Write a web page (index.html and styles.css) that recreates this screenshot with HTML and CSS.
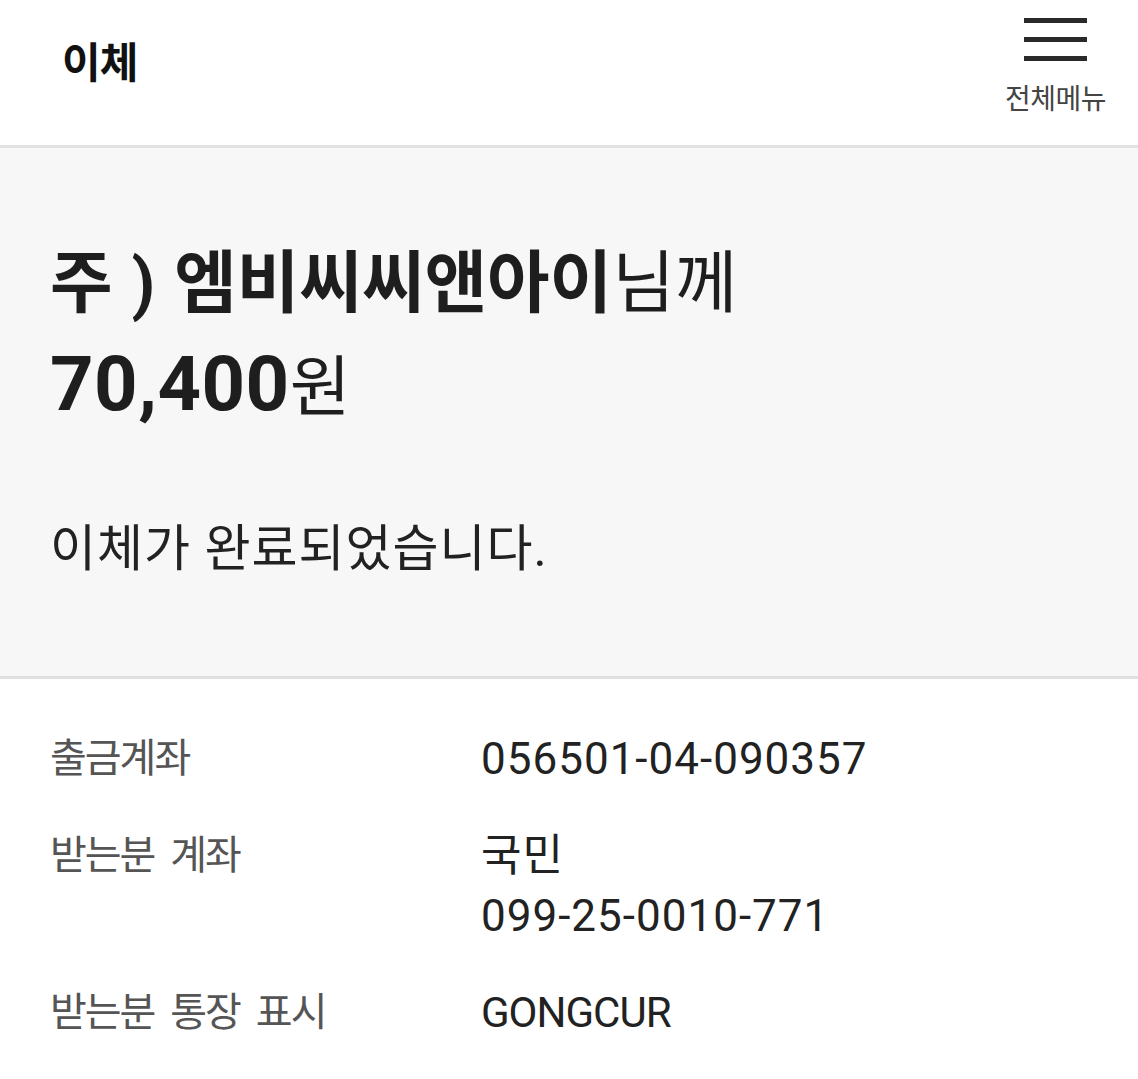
FILE: index.html
```html
<!DOCTYPE html>
<html lang="ko">
<head>
  <meta charset="UTF-8" />
  <meta name="viewport" content="width=device-width, initial-scale=1.0"/>
  <title>이체</title>
  <link rel="stylesheet" href="styles.css">
</head>
<body>

  <header>
    <h1>이체</h1>
    <div class="menu-btn">
      <div class="hamburger">
        <span></span>
        <span></span>
        <span></span>
      </div>
      <div class="menu-label">전체메뉴</div>
    </div>
  </header>

  <section class="result">
    <div class="to-whom"><strong>주 ) 엠비씨씨앤아이</strong>님께</div>
    <div class="amount"><strong>70,400</strong><span class="won">원</span></div>
    <p class="done">이체가 완료되었습니다.</p>
  </section>

  <section class="details">
    <div class="row">
      <div class="label">출금계좌</div>
      <div class="value">056501-04-090357</div>
    </div>
    <div class="row">
      <div class="label">받는분 계좌</div>
      <div class="value">국민<br>099-25-0010-771</div>
    </div>
    <div class="row">
      <div class="label">받는분 통장 표시</div>
      <div class="value name">GONGCUR</div>
    </div>
  </section>

</body>
</html>
```

FILE: styles.css
```css
body {
  margin: 0;
  font-family: Roboto, 'Noto Sans CJK KR', sans-serif;
  background: #fff;
  color: #222;
}
header {
  height: 145px;
  border-bottom: 3px solid #e2e2e2;
  display: flex;
  justify-content: space-between;
  align-items: flex-start;
  padding: 0 32px 0 62px;
}
header h1 {
  margin: 0;
  padding-top: 29px;
  font-size: 42px;
  font-weight: bold;
  color: #111;
  letter-spacing: -1px;
}
.menu-btn {
  display: flex;
  flex-direction: column;
  align-items: center;
  padding-top: 18px;
}
.hamburger {
  width: 63px;
  height: 43px;
  display: flex;
  flex-direction: column;
  justify-content: space-between;
}
.hamburger span {
  display: block;
  height: 5px;
  background: #2a2a2a;
}
.menu-label {
  margin-top: 16px;
  font-size: 28px;
  color: #444;
  letter-spacing: -0.5px;
}
.result {
  background: #f7f7f7;
  border-bottom: 3px solid #e0e0e0;
  padding: 88px 50px 80px;
  height: 360px;
}
.to-whom {
  font-size: 68px;
  line-height: 96px;
  letter-spacing: 0;
  word-spacing: 2px;
  color: #1e1e1e;
}
.amount {
  font-size: 76px;
  line-height: 104px;
  letter-spacing: 0.5px;
  color: #1e1e1e;
}
.won {
  font-size: 66px;
}
.to-whom strong, .amount strong {
  font-weight: bold;
}
.done {
  margin: 68px 0 0;
  font-size: 50px;
  letter-spacing: 1px;
  color: #222;
}
.details {
  padding: 50px 50px 28px;
}
.row {
  display: flex;
  margin-bottom: 37px;
  font-size: 40px;
  line-height: 60px;
}
.label {
  width: 431px;
  color: #555;
  letter-spacing: -2px;
  word-spacing: 8px;
}
.value {
  color: #222;
  font-size: 44px;
  letter-spacing: 1px;
}
.value.name {
  font-size: 42px;
  letter-spacing: -1px;
}
```
